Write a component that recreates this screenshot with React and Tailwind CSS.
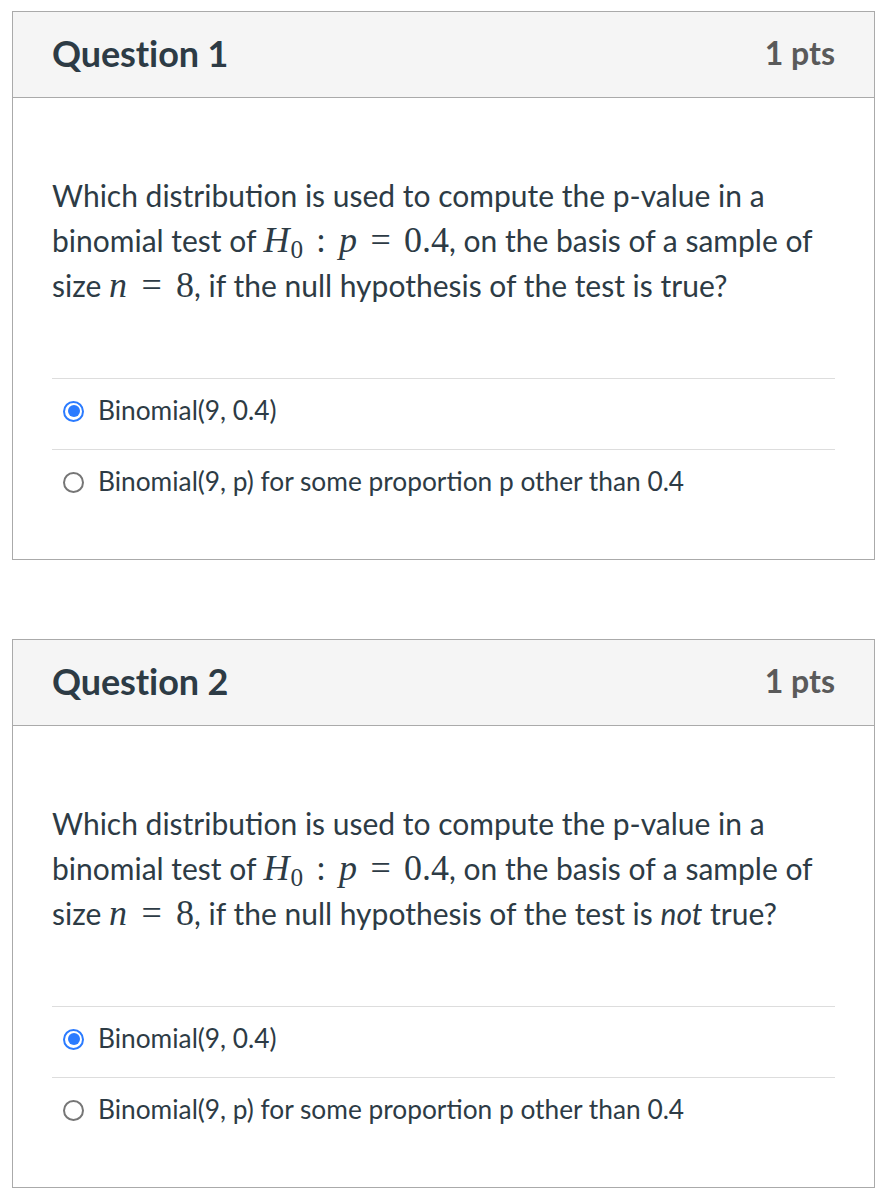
import React from 'react';

const serif = { fontFamily: '"Liberation Serif", "DejaVu Serif", serif' };

function M({ children }) {
    return <span className="text-[1.2em] leading-none" style={serif}>{children}</span>;
}

function H0() {
    return (
        <M>
            <i>H</i><span className="text-[0.7em] align-[-0.25em] ml-[1px]">0</span>
            <span className="mx-[0.36em]">:</span>
            <i>p</i>
            <span className="mx-[0.37em]">=</span>
            0.4
        </M>
    );
}

function Radio({ checked }) {
    if (checked) {
        return (
            <span className="w-[21px] h-[21px] rounded-full border-[2px] border-[#2b7bff] flex items-center justify-center shrink-0">
                <span className="w-[12px] h-[12px] rounded-full bg-[#2b7bff]" />
            </span>
        );
    }
    return <span className="w-[21px] h-[21px] rounded-full border-[2px] border-[#767676] shrink-0" />;
}

function Question({ num, notTrue }) {
    return (
        <div className="w-[863px] border border-[#aaaaaa] bg-white">
            <div className="h-[86px] bg-[#f5f5f5] border-b border-[#aaaaaa] px-[39px] flex items-center justify-between">
                <h2 className="text-[36px] font-bold text-[#2d3b45] tracking-[-0.1px] -mt-[3px]">Question {num}</h2>
                <span className="text-[32px] font-bold text-[#5a5a5a] -mt-[3px]">1 pts</span>
            </div>
            <div className="px-[39px] pt-[75px] pb-[39px]">
                <p className="text-[30px] leading-[45px] text-[#2d3b45]">
                    Which distribution is used to compute the p-value in a binomial test of <H0 />, on the basis of a sample of size <M><i>n</i><span className="mx-[0.4em]">=</span>8</M>, if the null hypothesis of the test is {notTrue ? <i>not</i> : null}{notTrue ? ' ' : ''}true?
                </p>
                <div className="mt-[70px]">
                    <div className="border-t border-[#dddddd] h-[71px] pb-[6px] flex items-center gap-[14px] pl-[11px] text-[26.3px] text-[#2d3b45]">
                        <Radio checked />
                        <span>Binomial(9, 0.4)</span>
                    </div>
                    <div className="border-t border-[#dddddd] h-[71px] pb-[6px] flex items-center gap-[14px] pl-[11px] text-[26.3px] text-[#2d3b45]">
                        <Radio />
                        <span>Binomial(9, p) for some proportion p other than 0.4</span>
                    </div>
                </div>
            </div>
        </div>
    );
}

export default function App() {
    return (
        <div className="bg-white min-h-[1198px] pt-[11px] pl-[12px] flex flex-col gap-[79px]" style={{ fontFamily: 'Lato, "Noto Sans", sans-serif' }}>
            <Question num={1} />
            <Question num={2} notTrue />
        </div>
    );
}
